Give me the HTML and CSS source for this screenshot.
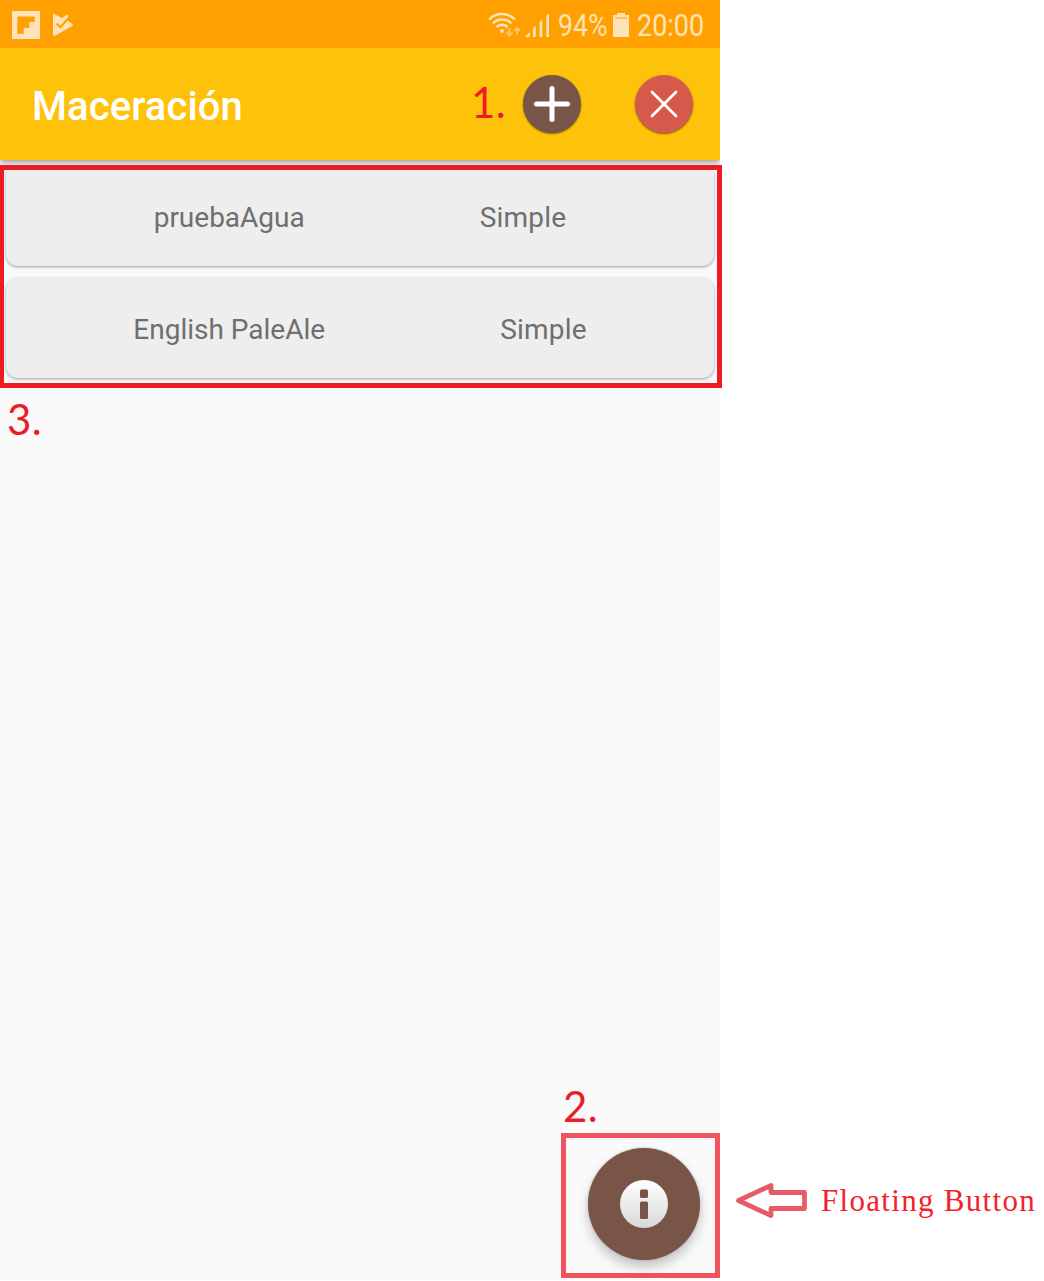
FILE: index.html
```html
<!DOCTYPE html>
<html lang="es">
<head>
<meta charset="utf-8">
<title>Maceración</title>
<link rel="stylesheet" href="styles.css">
</head>
<body>
<div class="page">
  <main class="phone">
    <div class="status">
      <svg class="notifications" width="64" height="30" viewBox="0 0 64 30">
        <path fill="#ffe3b8" fill-rule="evenodd" d="M0 1h28v28H0zM5.300 6.500v17.300h6.400v-5.800h5.600v-6h5.400V6.500z"/>
        <path fill="#ffe3b8" d="M41 5.500c0-1.500 1-1.800 2-1.200l7 4 5-3.800 1.800 1.500L55 10.500l5.200 3.300c1 .6 1 1.500 0 2.100L43.500 25.500c-1.500.9-2.500.3-2.500-1z"/>
        <path fill="none" stroke="#ffa000" stroke-width="2" d="M44.500 13.500l4 3.700L57.500 6.800"/>
      </svg>
      <svg class="signals" width="62" height="30" viewBox="0 0 62 30">
        <g fill="none" stroke="#ffe3b8" stroke-width="2.500">
          <path d="M1.200 9.500C8 2.200 20 2.200 27 9.500"/>
          <path d="M4.900 13.300c5-5.200 13.400-5.200 18.400 0"/>
          <path d="M8.600 17c3-3 8-3 11 0"/>
        </g>
        <circle cx="14" cy="21" r="2" fill="#ffe3b8"/>
        <path fill="none" stroke="#ffc163" stroke-width="2" d="M21.500 18v7M18.500 22.500l3 3 3-3M29 25v-7M26 21l3-3 3 3"/>
        <path fill="#ffe3b8" d="M36.700 27l5-5v5zM45 18.200l2.700-2.500V27H45zM51.600 12.200l2.700-2.500V27h-2.700zM58.300 5.700L61 3.200V27h-2.700z"/>
      </svg>
      <span class="percent">94%</span>
      <svg class="battery" width="16" height="24" viewBox="0 0 16 24">
        <path fill="#ffe3b8" d="M0 2h4V0h8v2h4v22H0z"/>
        <path stroke="#ffb437" stroke-width="1.500" d="M2 5h12"/>
      </svg>
      <span class="clock">20:00</span>
    </div>
    <header class="bar">
      <h1>Maceración</h1>
      <span class="mark mark-one">1.</span>
      <button class="round add" aria-label="Añadir">
        <svg width="58" height="58" viewBox="0 0 58 58"><path d="M13.500 29h31M29 13.500v31" stroke="#fff" stroke-width="5" stroke-linecap="round"/></svg>
      </button>
      <button class="round close" aria-label="Cerrar">
        <svg width="58" height="58" viewBox="0 0 58 58"><path d="M17 17l24 24M41 17L17 41" stroke="#fff" stroke-width="2.800" stroke-linecap="round"/></svg>
      </button>
    </header>
    <section class="recipes">
      <div class="card"><span>pruebaAgua</span><span class="kind">Simple</span></div>
      <div class="card"><span>English PaleAle</span><span class="kind">Simple</span></div>
    </section>
    <span class="mark mark-three">3.</span>
    <div class="bottom">
      <span class="mark mark-two">2.</span>
      <div class="frame">
        <button class="fab" aria-label="Información">
          <svg width="48" height="48" viewBox="0 0 48 48">
            <defs><linearGradient id="shine" x2="0" y2="1"><stop stop-color="#fff"/><stop offset="1" stop-color="#d8d8d8"/></linearGradient></defs>
            <circle cx="24" cy="24" r="24" fill="url(#shine)"/>
            <rect x="20" y="9.500" width="8" height="8.500" rx="1.500" fill="#795548"/>
            <rect x="20" y="21.500" width="8" height="17.500" rx="1.500" fill="#795548"/>
          </svg>
        </button>
      </div>
    </div>
  </main>
  <aside class="note">
    <svg width="74" height="42" viewBox="0 0 74 42"><path d="M3.500 20.500L36 5.500v7H69.500v16H36V35.500z" fill="#fff" stroke="#e65c66" stroke-width="4.800" stroke-linejoin="round"/></svg>
    <span class="label">Floating Button</span>
  </aside>
</div>
</body>
</html>
```
FILE: styles.css
```css
* { box-sizing: border-box; }
body { margin: 0; background: #fff; font-family: Roboto, sans-serif; }
button { border: 0; padding: 0; }
svg { display: block; flex: none; }
.page { display: flex; width: 1044px; height: 1281px; }
.phone { display: flex; flex-direction: column; width: 720px; height: 1280px; flex: none; background: #fafafa; }

.status { display: flex; align-items: center; height: 48px; padding: 2px 16px 0 12px; background: #ffa000; color: #ffe3b8; font-size: 31px; line-height: 36px; }
.notifications { margin-right: auto; }
.signals { margin-right: 8px; }
.percent { width: 49px; padding-top: 2px; transform: scaleX(.86); transform-origin: left; white-space: nowrap; }
.battery { margin: 0 8px 0 6px; }
.clock { width: 67px; padding-top: 2px; transform: scaleX(.87); transform-origin: left; white-space: nowrap; }

.bar { display: flex; align-items: center; height: 112px; padding: 0 27px 0 32px; background: #ffc20a; box-shadow: 0 3px 6px rgba(0,0,0,.35); clip-path: inset(0 0 -12px 0); flex: none; }
.bar h1 { margin: 6px auto 0 0; color: #fff; font-size: 40px; font-weight: 500; line-height: 48px; letter-spacing: .1px; }
.mark { color: #ed1c24; font-family: Lato, sans-serif; font-size: 42px; line-height: 50px; letter-spacing: .5px; }
.mark-one { width: 36px; margin: -4px 16px 0 0; }
.round { width: 58px; height: 58px; border-radius: 50%; box-shadow: 0 1px 2px rgba(0,0,0,.5); flex: none; }
.add { background: #795548; margin-right: 54px; }
.close { background: #d65a49; }

.recipes { position: relative; display: flex; flex-direction: column; gap: 12px; width: 722px; height: 223px; margin-top: 5px; padding: 0 3px 0 2px; border: 5px solid #ed1c24; border-left-width: 4px; flex: none; }
.card { display: flex; align-items: center; justify-content: center; gap: 176px; width: 708px; height: 100px; background: #eee; border-radius: 12px; box-shadow: 0 1px 3px rgba(0,0,0,.38); color: #6f6f6f; font-size: 28px; line-height: 34px; }
.card:first-child { height: 96px; border-radius: 4px 4px 12px 12px; padding-bottom: 3px; }
.card span { padding-top: 3px; }
.card .kind { letter-spacing: .2px; margin-left: -1px; }
.mark-three { margin: 6px 0 0 7px; }

.bottom { display: flex; flex-direction: column; width: 159px; margin: auto 0 2px auto; }
.mark-two { margin: 0 0 2px 2px; }
.frame { width: 159px; height: 145px; padding: 10px 0 0 22px; border: 5px solid #f3535e; }
.fab { display: grid; place-items: center; width: 112px; height: 112px; border-radius: 50%; background: #795548; box-shadow: 0 7px 12px rgba(0,0,0,.22), 0 0 2px rgba(0,0,0,.3); }

.note { display: flex; align-items: center; height: 42px; margin: 1180px 0 0 15px; color: #f5202a; }
.label { margin-left: 12px; font-family: "Liberation Serif", serif; font-size: 31px; white-space: nowrap; letter-spacing: 1.3px; }
```
